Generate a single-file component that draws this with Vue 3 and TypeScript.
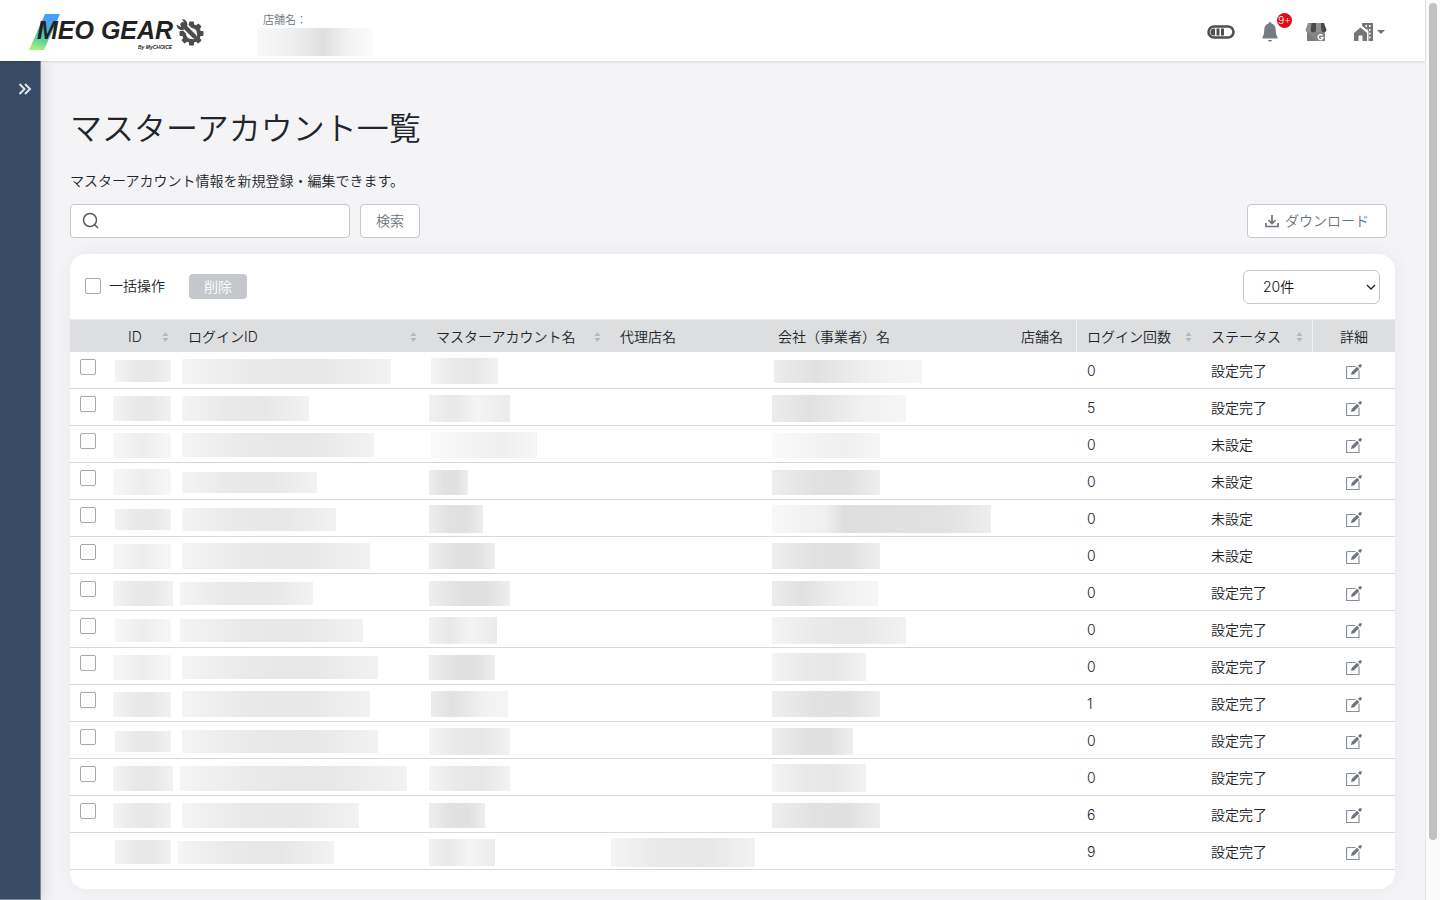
<script setup lang="ts">
import { ref } from 'vue'

/** A masked value: [indent, width, height, tint] */
type Mask = [number, number, number, string]

interface Account {
  id: Mask
  login: Mask
  master: Mask
  agency?: Mask
  company?: Mask
  count: number
  status: string
  selectable: boolean
}

const DONE = '設定完了'
const UNSET = '未設定'

const accounts: Account[] = [
  { id: [3, 56, 22, 'mid'], login: [4, 209, 25, 'mid'], master: [5, 67, 26, 'mid'], company: [6, 148, 23, 'fade'], count: 0, status: DONE, selectable: true },
  { id: [1, 58, 25, 'mid'], login: [4, 127, 25, 'mid'], master: [3, 81, 27, 'wave'], company: [4, 134, 27, 'fade'], count: 5, status: DONE, selectable: true },
  { id: [1, 58, 25, 'soft'], login: [4, 192, 24, 'mid'], master: [5, 106, 26, 'pale'], company: [4, 108, 25, 'pale'], count: 0, status: UNSET, selectable: true },
  { id: [1, 58, 26, 'soft'], login: [4, 135, 21, 'mid'], master: [3, 39, 25, 'dark'], company: [4, 108, 25, 'dark'], count: 0, status: UNSET, selectable: true },
  { id: [3, 56, 21, 'mid'], login: [4, 154, 23, 'mid'], master: [3, 54, 28, 'dark'], company: [4, 219, 28, 'rise'], count: 0, status: UNSET, selectable: true },
  { id: [1, 58, 25, 'soft'], login: [4, 188, 26, 'mid'], master: [3, 66, 26, 'dark'], company: [4, 108, 26, 'dark'], count: 0, status: UNSET, selectable: true },
  { id: [1, 60, 25, 'mid'], login: [2, 133, 23, 'mid'], master: [3, 81, 25, 'dark'], company: [4, 106, 25, 'fade'], count: 0, status: DONE, selectable: true },
  { id: [3, 56, 23, 'soft'], login: [2, 183, 23, 'mid'], master: [3, 68, 27, 'wave'], company: [4, 134, 27, 'mid'], count: 0, status: DONE, selectable: true },
  { id: [1, 58, 25, 'soft'], login: [4, 196, 23, 'mid'], master: [3, 66, 25, 'dark'], company: [4, 94, 28, 'mid'], count: 0, status: DONE, selectable: true },
  { id: [1, 58, 25, 'mid'], login: [4, 188, 26, 'mid'], master: [5, 77, 26, 'fade'], company: [4, 108, 26, 'dark'], count: 1, status: DONE, selectable: true },
  { id: [3, 56, 21, 'mid'], login: [4, 196, 23, 'mid'], master: [3, 81, 27, 'mid'], company: [4, 81, 27, 'dark'], count: 0, status: DONE, selectable: true },
  { id: [1, 60, 25, 'mid'], login: [2, 227, 25, 'mid'], master: [3, 81, 25, 'mid'], company: [4, 94, 28, 'mid'], count: 0, status: DONE, selectable: true },
  { id: [1, 58, 25, 'mid'], login: [4, 177, 25, 'mid'], master: [3, 56, 25, 'dark'], company: [4, 108, 25, 'dark'], count: 6, status: DONE, selectable: true },
  { id: [3, 56, 24, 'mid'], login: [0, 156, 23, 'mid'], master: [3, 66, 27, 'wave'], agency: [1, 144, 29, 'mid'], count: 9, status: DONE, selectable: false },
]

const maskKeys = ['id', 'login', 'master', 'agency', 'company'] as const

const columns = [
  { key: 'id', label: 'ID', sortable: true },
  { key: 'login', label: 'ログインID', sortable: true },
  { key: 'master', label: 'マスターアカウント名', sortable: true },
  { key: 'agency', label: '代理店名', sortable: false },
  { key: 'company', label: '会社（事業者）名', sortable: false },
  { key: 'shop', label: '店舗名', sortable: false },
  { key: 'count', label: 'ログイン回数', sortable: true },
  { key: 'status', label: 'ステータス', sortable: true },
]

const keyword = ref('')
const pageSize = ref('20')

function maskStyle(mask: Mask) {
  return { marginLeft: `${mask[0]}px`, width: `${mask[1]}px`, height: `${mask[2]}px` }
}
</script>

<template>
  <div class="shell">
    <div class="app">
      <header class="topbar">
        <a href="#" class="logo" aria-label="MEO GEAR by MyCHOICE">
          <svg width="176" height="40" viewBox="0 0 176 40">
            <defs>
              <linearGradient id="slash" x1="0.6" y1="0" x2="0.35" y2="1">
                <stop offset="0.1" stop-color="#459dfc" />
                <stop offset="0.55" stop-color="#4fc0b8" />
                <stop offset="0.75" stop-color="#63d692" />
                <stop offset="1" stop-color="#a5ef7c" />
              </linearGradient>
            </defs>
            <path d="M17 2h15L16 38H1z" fill="url(#slash)" />
            <text x="9" y="27" class="logo-name">MEO GEAR</text>
            <text x="110" y="37" class="logo-sub">By MyCHOICE</text>
            <g transform="translate(163.500 21.500)">
              <g fill="#4d4d4d">
                <circle r="9.500" />
                <rect v-for="n in 4" :key="n" x="-2.500" y="-12" width="5" height="24" rx="1" :transform="`rotate(${n * 45})`" />
              </g>
              <circle r="5.500" fill="#fff" />
              <path d="M-11-11 1.500 1.500" stroke="#fff" stroke-width="8" stroke-linecap="round" />
              <path d="M-9-9 3 3" stroke="#4d4d4d" stroke-width="4.500" stroke-linecap="round" />
              <path d="M-9.500-14.500c3.500 0 6 3 5.300 6.500l-4 4.500c-3.500.5-6.500-1.500-6.800-5.500l4 2.200 2.700-1.700.3-3.500z" fill="#4d4d4d" />
            </g>
          </svg>
        </a>
        <div class="shop">
          <span class="shop-label">店舗名：</span>
          <span class="shop-name"></span>
        </div>
        <nav class="tools">
          <button type="button" class="tool" aria-label="利用状況">
            <svg width="28" height="14" viewBox="0 0 28 14">
              <rect x="1.500" y="1.500" width="25" height="11" rx="5.500" fill="#fff" stroke="#4f4f4f" stroke-width="2.600" />
              <path d="M8 3.500v7H7a3.500 3.500 0 0 1 0-7zM9.500 3.500h3v7h-3zM14 3.500h3v7h-3z" fill="#4f4f4f" />
            </svg>
          </button>
          <button type="button" class="tool bell" aria-label="お知らせ">
            <svg width="16" height="20" viewBox="0 0 16 20">
              <path d="M8 0c.9 0 1.300.6 1.300 1.400C12 2 13.500 4 13.700 7c.2 4 .5 6.500 1.800 8v1.500H.5V15c1.300-1.500 1.600-4 1.800-8C2.500 4 4 2 6.700 1.400 6.700.6 7.100 0 8 0zM6 18h4c-.3 2.200-3.700 2.200-4 0z" fill="#747c86" />
            </svg>
            <span class="badge">9+</span>
          </button>
          <button type="button" class="tool" aria-label="店舗管理">
            <svg width="22" height="18" viewBox="0 0 22 18">
              <path d="M2 7h18v11H2z" fill="#858585" />
              <path d="M2 9 11 18H2z" fill="#7a7a7a" />
              <path d="M3 0h4.500L6 7c-.3 3-5.500 3-5.500 0z" fill="#8f8f8f" />
              <path d="M6.500 0H11v7c0 3-5.300 3-5.300 0z" fill="#484848" />
              <path d="M11 0h4.500l.8 7c0 3-5.300 3-5.300 0z" fill="#8f8f8f" />
              <path d="M15.500 0H19l2.500 7c0 3-5.200 3-5.200 0z" fill="#484848" />
              <path d="M17.500 12.500a2.500 2.500 0 1 0 .5 2.200h-2.300" fill="none" stroke="#fff" stroke-width="1.300" />
            </svg>
          </button>
          <button type="button" class="tool office" aria-label="アカウントメニュー">
            <svg width="19" height="18" viewBox="0 0 19 18">
              <path d="M8 0h11v18h-4.500V8L8 3z" fill="#757575" />
              <path d="M0 10 6.500 4.500 13 10v8H8.500v-5.500h-4V18H0z" fill="#757575" />
              <path d="M11.500 3h1.500M15 3h1.500M12.500 6.800h1M15 6.800h1.500M15 10.600h1.500M15 14.400h1.500" stroke="#fff" stroke-width="1.800" />
            </svg>
            <svg width="8" height="4" viewBox="0 0 8 4"><path d="M0 0h8L4 4z" fill="#6c757d" /></svg>
          </button>
        </nav>
      </header>

      <div class="body">
        <aside class="sidebar">
          <button type="button" class="expand" aria-label="メニューを開く">
            <svg width="14" height="12" viewBox="0 0 14 12"><path d="m1.500 1 5 5-5 5M7 1l5 5-5 5" fill="none" stroke="#dfe4ea" stroke-width="2" /></svg>
          </button>
        </aside>

        <main class="content">
          <h1>マスターアカウント一覧</h1>
          <p class="lead">マスターアカウント情報を新規登録・編集できます。</p>

          <form class="searchbar" @submit.prevent>
            <label class="search">
              <svg width="18" height="18" viewBox="0 0 18 18"><circle cx="8" cy="8" r="6.500" fill="none" stroke="#5c5c5c" stroke-width="1.500" /><path d="m12.700 12.700 3.300 3.300" stroke="#5c5c5c" stroke-width="1.500" /></svg>
              <input v-model="keyword" type="text" aria-label="検索キーワード" />
            </label>
            <button type="submit" class="btn">検索</button>
            <button type="button" class="btn download">
              <svg width="14" height="14" viewBox="0 0 14 14"><path d="M7 1v8M3.500 6 7 9.500 10.500 6" fill="none" stroke="#6c757d" stroke-width="1.700" /><path d="M1 9v3.500h12V9" fill="none" stroke="#6c757d" stroke-width="1.700" /></svg>
              ダウンロード
            </button>
          </form>

          <section class="card">
            <div class="bulk">
              <label class="bulk-check"><input type="checkbox" class="check" />一括操作</label>
              <button type="button" class="delete" disabled>削除</button>
              <div class="size">
                <select v-model="pageSize" aria-label="表示件数">
                  <option value="20">20件</option>
                  <option value="50">50件</option>
                </select>
                <svg width="10" height="7" viewBox="0 0 10 7"><path d="m1 1 4 4 4-4" fill="none" stroke="#222" stroke-width="1.300" /></svg>
              </div>
            </div>

            <table>
              <colgroup>
                <col class="c-check" />
                <col v-for="c in columns" :key="c.key" :class="`c-${c.key}`" />
                <col class="c-detail" />
              </colgroup>
              <thead>
                <tr>
                  <th></th>
                  <th v-for="c in columns" :key="c.key" :class="`h-${c.key}`">
                    <div class="head">
                      <span>{{ c.label }}</span>
                      <svg v-if="c.sortable" width="7" height="10" viewBox="0 0 7 10"><path d="M3.500 0 6.500 4h-6zM3.500 10l-3-4h6z" fill="#b4b7bc" /></svg>
                    </div>
                  </th>
                  <th class="detail">詳細</th>
                </tr>
              </thead>
              <tbody>
                <tr v-for="(a, i) in accounts" :key="i">
                  <td class="select"><input v-if="a.selectable" type="checkbox" class="check" :aria-label="`${i + 1}行目を選択`" /></td>
                  <td v-for="k in maskKeys" :key="k" class="masked">
                    <div v-if="a[k]" class="mask" :class="a[k]![3]" :style="maskStyle(a[k]!)"></div>
                  </td>
                  <td></td>
                  <td class="text">{{ a.count }}</td>
                  <td class="text">{{ a.status }}</td>
                  <td class="detail">
                    <button type="button" class="edit" :aria-label="`${i + 1}行目を編集`">
                      <svg width="16" height="16" viewBox="0 0 16 16"><path d="M9.500 2.500H1.500a1 1 0 0 0-1 1v11h12.500v-8" fill="none" stroke="#8a8f96" stroke-width="1.200" /><path d="m5 11 .7-3 5.300-5.200 2.300 2.300L8 10.300z" fill="#6b737d" /><path d="m12 1.900 1.600-1.600h2.100v1.700l-1.500 2.100z" fill="#6b737d" /></svg>
                    </button>
                  </td>
                </tr>
              </tbody>
            </table>
          </section>
        </main>
      </div>
    </div>
    <div class="scroll-track" aria-hidden="true"><div class="scroll-thumb"></div></div>
  </div>
</template>

<style>
body {
  margin: 0;
  background: #f4f4f7;
}
</style>

<style scoped>
* {
  box-sizing: border-box;
}
.shell {
  display: flex;
  height: 100vh;
  overflow: hidden;
  font-family: Inter, "Noto Sans CJK JP", sans-serif;
  font-size: 14px;
  font-weight: 350;
  line-height: 20px;
  color: #212529;
}
button,
input,
select {
  font: inherit;
  margin: 0;
}
svg {
  display: block;
  flex: none;
}
.app {
  flex: 1;
  min-width: 0;
  display: flex;
  flex-direction: column;
}
.topbar {
  position: relative;
  flex: none;
  display: flex;
  align-items: center;
  height: 61px;
  padding: 2px 40px 0 28px;
  background: #fff;
  box-shadow: 0 1px 2px rgba(0, 0, 0, 0.12);
}
.logo-name {
  font: italic bold 25px "Liberation Sans", sans-serif;
  fill: #222;
}
.logo-sub {
  font: italic bold 5px "Liberation Sans", sans-serif;
  fill: #222;
}
.shop {
  display: flex;
  flex-direction: column;
  margin-left: 53px;
  padding-top: 4px;
}
.shop-label {
  padding-left: 6px;
  font-size: 11px;
  line-height: 16px;
  color: #6c757d;
}
.shop-name {
  width: 117px;
  height: 28px;
  background: linear-gradient(90deg, #f8f8f8, #efefef 30%, #dfdfdf 57%, #f3f3f3 78%, #fcfcfc);
}
.tools {
  display: flex;
  align-items: center;
  gap: 27px;
  margin-left: auto;
}
.tool {
  position: relative;
  padding: 0;
  border: 0;
  background: none;
  display: flex;
  align-items: center;
}
.office {
  gap: 4px;
}
.badge {
  position: absolute;
  left: 15px;
  top: -9px;
  width: 15px;
  height: 15px;
  border-radius: 50%;
  background: #e50914;
  color: #fff;
  font-size: 10px;
  line-height: 15px;
  text-align: center;
}
.body {
  flex: 1;
  min-height: 0;
  display: flex;
}
.sidebar {
  flex: none;
  width: 41px;
  padding: 22px 0 0 18px;
  background: #394c65;
  border: solid #7b889a;
  border-width: 0 1px 1px 0;
  box-shadow: 2px 0 14px rgba(40, 50, 90, 0.16);
}
.expand {
  display: block;
  padding: 0;
  border: 0;
  background: none;
}
.content {
  flex: 1;
  min-width: 0;
  padding: 44px 30px 11px 29px;
}
h1 {
  margin: 0;
  font-size: 32px;
  font-weight: 350;
  line-height: 48px;
}
.lead {
  margin: 18px 0 13px;
}
.searchbar {
  display: flex;
  gap: 10px;
  padding-right: 8px;
  margin-bottom: 16px;
}
.search {
  display: flex;
  align-items: center;
  gap: 8px;
  width: 280px;
  height: 34px;
  padding: 0 11px;
  border: 1px solid #c4c7cc;
  border-radius: 4px;
  background: #fff;
}
.search input {
  flex: 1;
  min-width: 0;
  border: 0;
  outline: 0;
  background: none;
}
.btn {
  display: flex;
  align-items: center;
  height: 34px;
  padding: 0 15px;
  border: 1px solid #c4c7cc;
  border-radius: 4px;
  background: #fff;
  color: #6c757d;
}
.download {
  gap: 6px;
  margin-left: auto;
  padding: 0 17px;
}
.card {
  padding-bottom: 19px;
  border-radius: 16px;
  background: #fff;
  box-shadow: 0 0 20px rgba(30, 35, 60, 0.05);
}
.bulk {
  display: flex;
  align-items: center;
  height: 65px;
  padding: 0 15px;
}
.bulk-check {
  display: flex;
  align-items: center;
  gap: 8px;
  padding-bottom: 2px;
}
.check {
  appearance: none;
  display: block;
  width: 16px;
  height: 16px;
  border: 1px solid #a6a8ab;
  border-radius: 2px;
  background: #fff;
}
.delete {
  height: 25px;
  margin-left: 24px;
  padding: 0 15px;
  border: 0;
  border-radius: 4px;
  background: #c4c8cc;
  color: #fff;
}
.size {
  position: relative;
  margin-left: auto;
}
.size select {
  appearance: none;
  display: block;
  width: 137px;
  height: 34px;
  padding: 0 19px;
  border: 1px solid #c4c7cc;
  border-radius: 6px;
  background: #fff;
  color: #111;
}
.size svg {
  position: absolute;
  right: 4px;
  top: 14px;
  pointer-events: none;
}
table {
  width: 100%;
  table-layout: fixed;
  border-collapse: separate;
  border-spacing: 0;
}
.c-check { width: 42px; }
.c-id { width: 66px; }
.c-login { width: 248px; }
.c-master { width: 184px; }
.c-agency { width: 158px; }
.c-shop { width: 66px; }
.c-count { width: 124px; }
.c-status { width: 112px; }
.c-detail { width: 82px; }
th {
  height: 33px;
  padding: 1px 9px 0 10px;
  border-top: 1px solid #ebecee;
  background: #dddee0;
  font-weight: 350;
  text-align: left;
  white-space: nowrap;
}
.h-id {
  padding-left: 16px;
}
.h-shop {
  padding-right: 0;
}
.h-shop,
.h-status {
  border-right: 1px solid #f1f1f2;
}
.head {
  display: flex;
  align-items: center;
  justify-content: space-between;
}
td {
  height: 37px;
  padding: 2px 0 0;
  border-bottom: 1px solid #d8d9dd;
}
.select {
  padding: 7px 0 0 10px;
  vertical-align: top;
}
.text {
  padding-left: 10px;
}
th.detail {
  padding: 1px 0 0;
  text-align: center;
}
.edit {
  display: block;
  margin: 2px auto 0;
  padding: 0;
  border: 0;
  background: none;
}
.mask.mid {
  background: linear-gradient(90deg, #f4f4f4, #e9e9e9 35%, #e7e7e7 65%, #f2f2f2);
}
.mask.soft {
  background: linear-gradient(90deg, #f7f7f7, #ededed 50%, #f7f7f7);
}
.mask.pale {
  background: linear-gradient(90deg, #fafafa, #efefef 65%, #f6f6f6);
}
.mask.dark {
  background: linear-gradient(90deg, #eeeeee, #e1e1e1 40%, #e0e0e0 70%, #eeeeee);
}
.mask.fade {
  background: linear-gradient(90deg, #ececec, #e1e1e1 28%, #f1f1f1 68%, #f6f6f6);
}
.mask.wave {
  background: linear-gradient(90deg, #f1f1f1, #e8e8e8 30%, #f4f4f4 60%, #ebebeb);
}
.mask.rise {
  background: linear-gradient(90deg, #f8f8f8, #efefef 25%, #dedede 33%, #e2e2e2 80%, #eeeeee);
}
.scroll-track {
  flex: none;
  width: 15px;
  padding: 3px 3px 60px;
  border-left: 1px solid #e8e8e8;
  background: #fafafa;
}
.scroll-thumb {
  width: 8px;
  height: 100%;
  border-radius: 4px;
  background: #c1c1c1;
}
</style>
